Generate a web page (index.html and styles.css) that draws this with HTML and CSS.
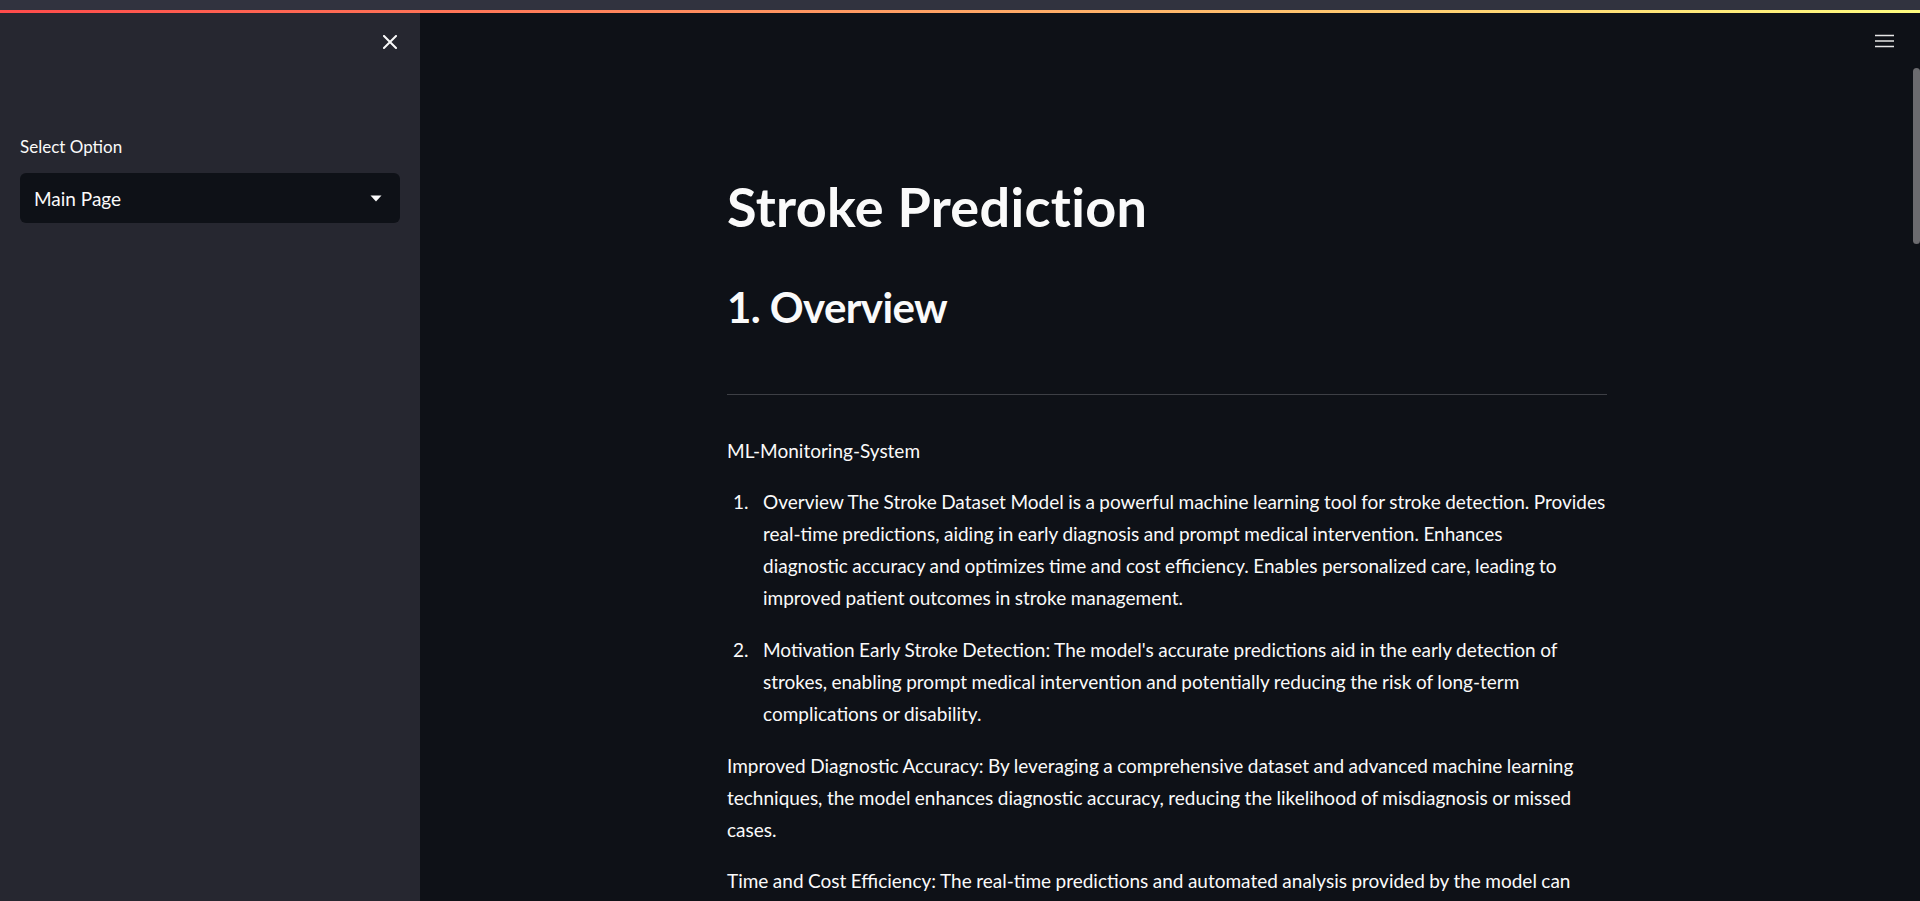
FILE: index.html
```html
<!DOCTYPE html>
<html lang="en">
<head>
<meta charset="utf-8">
<title>Stroke Prediction</title>
<link rel="stylesheet" href="styles.css">
</head>
<body>
<div class="chrome"></div>
<div class="decoration"></div>
<div class="app">
  <aside class="sidebar">
    <div class="sidebar-head">
      <button class="close-btn" aria-label="Close sidebar">
        <svg width="14" height="14" viewBox="0 0 14 14"><path d="M1 1 L13 13 M13 1 L1 13" stroke="#fafafa" stroke-width="2" stroke-linecap="square" fill="none"/></svg>
      </button>
    </div>
    <div class="widget">
      <label class="widget-label">Select Option</label>
      <div class="select">
        <span class="select-value">Main Page</span>
        <svg class="caret" width="12" height="7" viewBox="0 0 12 7"><path d="M0.5 0.5 L11.5 0.5 L6 6.5 Z" fill="#fafafa"/></svg>
      </div>
    </div>
  </aside>
  <main class="main">
    <header class="main-header">
      <button class="menu-btn" aria-label="Menu">
        <svg width="20" height="14" viewBox="0 0 20 14"><path d="M0 1.5 H19 M0 7 H19 M0 12.5 H19" stroke="#e6e6e6" stroke-width="1.6" fill="none"/></svg>
      </button>
    </header>
    <div class="content">
      <h1 class="title">Stroke Prediction</h1>
      <h2 class="subtitle">1. Overview</h2>
      <hr class="rule">
      <p class="para">ML-Monitoring-System</p>
      <ol class="list">
        <li><span>Overview The Stroke Dataset Model is a powerful machine learning tool for stroke detection. Provides real-time predictions, aiding in early diagnosis and prompt medical intervention. Enhances<br>diagnostic accuracy and optimizes time and cost efficiency. Enables personalized care, leading to improved patient outcomes in stroke management.</span></li>
        <li><span>Motivation Early Stroke Detection: The model's accurate predictions aid in the early detection of strokes, enabling prompt medical intervention and potentially reducing the risk of long-term complications or disability.</span></li>
      </ol>
      <p class="para">Improved Diagnostic Accuracy: By leveraging a comprehensive dataset and advanced machine learning techniques, the model enhances diagnostic accuracy, reducing the likelihood of misdiagnosis or missed cases.</p>
      <p class="para">Time and Cost Efficiency: The real-time predictions and automated analysis provided by the model can streamline the diagnostic process, saving valuable time for healthcare professionals and reducing unnecessary costs.</p>
    </div>
    <div class="scroll-thumb"></div>
  </main>
</div>
</body>
</html>
```
FILE: styles.css
```css
* { box-sizing: border-box; }
html, body {
  margin: 0;
  padding: 0;
  height: 100%;
  overflow: hidden;
}
body {
  background: #0e1117;
  color: #fafafa;
  font-family: Lato, "Liberation Sans", sans-serif;
}
.chrome {
  height: 10px;
  background: #31333f;
}
.decoration {
  height: 3px;
  background: linear-gradient(90deg, #ff4b4b, #fffd80);
}
.app {
  display: flex;
  height: 888px;
}
.sidebar {
  width: 420px;
  flex: 0 0 420px;
  background: #262730;
  padding: 0 20px;
}
.sidebar-head {
  display: flex;
  justify-content: flex-end;
  padding-top: 22px;
  padding-right: 3px;
}
.close-btn, .menu-btn {
  background: none;
  border: 0;
  padding: 0;
  margin: 0;
  display: flex;
  cursor: pointer;
}
.widget {
  margin-top: 88px;
}
.widget-label {
  display: block;
  font-size: 17px;
  line-height: 20px;
  margin-bottom: 16px;
}
.select {
  display: flex;
  align-items: center;
  justify-content: space-between;
  height: 50px;
  background: #0e1117;
  border-radius: 6px;
  padding: 0 18px 0 14px;
}
.select-value {
  font-size: 19px;
}
.main {
  flex: 1;
  position: relative;
  padding-right: 6px;
}
.main-header {
  display: flex;
  justify-content: flex-end;
  padding: 21px 19px 0 0;
  height: 40px;
}
.content {
  width: 880px;
  margin: 0 auto;
  padding-top: 121px;
  word-spacing: -0.4px;
}
.title {
  font-size: 54px;
  line-height: 66px;
  font-weight: 700;
  margin: 0;
  word-spacing: 0;
  letter-spacing: 0.3px;
}
.subtitle {
  font-size: 42px;
  line-height: 54px;
  font-weight: 700;
  margin: 40px 0 0;
  letter-spacing: -0.6px;
  word-spacing: 0;
}
.rule {
  border: 0;
  height: 1px;
  background: #3d3f45;
  margin: 60px 0 0;
}
.para {
  font-size: 19px;
  line-height: 32px;
  margin: 40px 0 0;
}
.list + .para { margin-top: 20px; }
.para + .para { margin-top: 19px; }
.list {
  margin: 19px 0 0;
  padding: 0;
  list-style: none;
  counter-reset: item;
  font-size: 19px;
  line-height: 32px;
}
.list li {
  display: grid;
  grid-template-columns: 36px 1fr;
  counter-increment: item;
}
.list li::before {
  content: counter(item) ".";
  padding-left: 6px;
}
.list li + li { margin-top: 20px; }
.scroll-thumb {
  position: absolute;
  right: 0;
  top: 55px;
  width: 7px;
  height: 176px;
  border-radius: 4px;
  background: #6b6b6f;
}
```
